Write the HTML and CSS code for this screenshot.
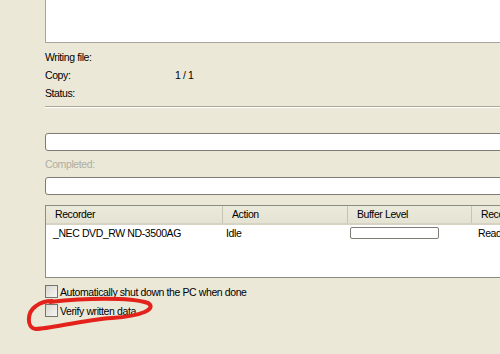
FILE: index.html
```html
<!DOCTYPE html>
<html>
<head>
<meta charset="utf-8">
<link rel="stylesheet" href="styles.css">
</head>
<body>
<div class="panel">
  <div class="log"></div>
  <div class="info">
    <div class="info-row"><span class="info-label">Writing file:</span><span></span></div>
    <div class="info-row"><span class="info-label">Copy:</span><span>1 / 1</span></div>
    <div class="info-row"><span class="info-label">Status:</span><span></span></div>
  </div>
  <div class="separator"></div>
  <div class="progress first"></div>
  <div class="completed">Completed:</div>
  <div class="progress"></div>
  <div class="list">
    <div class="list-header">
      <div class="col c1">Recorder</div>
      <div class="col c2">Action</div>
      <div class="col c3">Buffer Level</div>
      <div class="col c4">Recorder Status</div>
    </div>
    <div class="list-row">
      <div class="cell c1">_NEC DVD_RW ND-3500AG</div>
      <div class="cell c2">Idle</div>
      <div class="cell c3"><div class="buffer"></div></div>
      <div class="cell c4">Ready</div>
    </div>
  </div>
  <div class="checks">
    <label class="check"><span class="box"></span><span>Automatically shut down the PC when done</span></label>
    <label class="check"><span class="box"></span><span>Verify written data</span></label>
  </div>
</div>
<svg class="scribble" width="500" height="354" viewBox="0 0 500 354">
  <path d="M 50 302 C 85 298, 130 297, 148 303 C 157 309, 142 316, 112 318 C 82 320, 50 329, 36 329 C 26 328, 27 312, 36 306 C 40 303, 46 301, 52 301" fill="none" stroke="#e3231b" stroke-width="4" stroke-linecap="round" stroke-linejoin="round"/>
</svg>
</body>
</html>
```
FILE: styles.css
```css
html, body {
  margin: 0;
  padding: 0;
  width: 500px;
  height: 354px;
  overflow: hidden;
  background: #ebe8d8;
  font-family: "Liberation Sans", Arial, sans-serif;
  font-size: 10.5px;
  letter-spacing: -0.4px;
  color: #000;
  position: relative;
}

.panel {
  margin-left: 45px;
  width: 520px;
  display: flex;
  flex-direction: column;
}

.log {
  height: 42px;
  background: #fff;
  border-left: 1px solid #a7a69c;
  border-bottom: 1px solid #a7a69c;
}

.info {
  margin-top: 5px;
  display: flex;
  flex-direction: column;
}

.info-row {
  height: 18px;
  line-height: 18px;
  display: flex;
}

.info-label {
  width: 130px;
}

.separator {
  margin-top: 4px;
  border-top: 1px solid #aca899;
  border-bottom: 1px solid #fff;
}

.progress {
  height: 16px;
  border: 1px solid #7c7c74;
  border-radius: 3px;
  background: #fff;
}

.progress.first {
  margin-top: 25px;
}

.completed {
  color: #b0ad9f;
  height: 14px;
  line-height: 14px;
  margin-top: 6px;
  margin-bottom: 6px;
}

.list {
  margin-top: 10px;
  height: 71px;
  background: #fff;
  border: 1px solid #8d8c84;
  display: flex;
  flex-direction: column;
  overflow: hidden;
}

.list-header {
  height: 17px;
  background: linear-gradient(#ebeadb, #e4e2d3);
  border-bottom: 2px solid #d6d3c2;
  display: flex;
}

.col {
  flex-shrink: 0;
  line-height: 17px;
  padding-left: 9px;
  border-right: 1px solid #c7c5b2;
  box-sizing: border-box;
  white-space: nowrap;
}

.c1 { width: 177px; }
.c2 { width: 125px; }
.c3 { width: 124px; }
.c4 { width: 100px; }

.list-row {
  display: flex;
  height: 16px;
  line-height: 16px;
}

.cell {
  flex-shrink: 0;
  box-sizing: border-box;
  white-space: nowrap;
  overflow: hidden;
}

.list-row .c1 { padding-left: 7px; }
.list-row .c2 { padding-left: 3px; }
.list-row .c3 { padding-left: 2px; padding-top: 2px; }
.list-row .c4 { padding-left: 6px; }

.buffer {
  width: 87px;
  height: 10px;
  border: 1px solid #7c7c74;
  border-radius: 2px;
  background: #fff;
}

.checks {
  margin-top: 7px;
  display: flex;
  flex-direction: column;
  gap: 6px;
}

.check {
  display: flex;
  align-items: center;
  height: 13px;
  gap: 2px;
}

.box {
  width: 11px;
  height: 11px;
  border: 1px solid #75756e;
  background: linear-gradient(135deg, #d8d7cf, #f6f6f3);
}

.scribble {
  position: absolute;
  left: 0;
  top: 0;
  pointer-events: none;
}
```
